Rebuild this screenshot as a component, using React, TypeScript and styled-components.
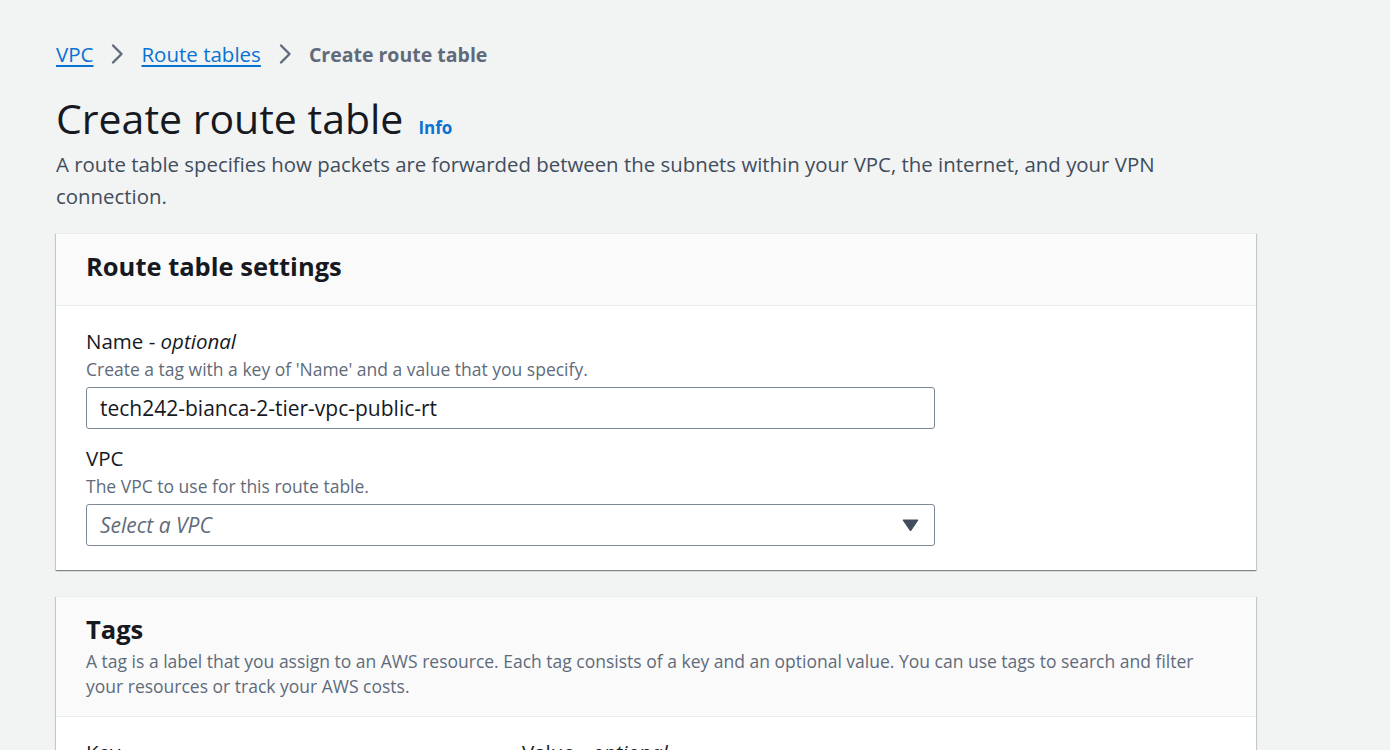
import React from "react";
import styled, { createGlobalStyle } from "styled-components";

const GlobalStyle = createGlobalStyle`
  html, body {
    margin: 0;
    padding: 0;
    background: #f2f3f3;
    font-family: "Open Sans", "Noto Sans", Arial, sans-serif;
    color: #16191f;
  }
  * { box-sizing: border-box; }
`;

const Page = styled.main`
  padding: 36px 0 0 56px;
  width: 1256px;
`;

const Breadcrumbs = styled.nav`
  display: flex;
  align-items: center;
  gap: 17px;
  height: 36px;
  font-size: 20.5px;
`;

const CrumbLink = styled.a`
  color: #0972d3;
  text-decoration: underline;
  text-underline-offset: 3px;
`;

const CrumbCurrent = styled.span`
  color: #5f6b7a;
  font-weight: 700;
  font-size: 19.5px;
`;

const Chevron = () => (
  <svg width="14" height="22" viewBox="0 0 14 22" fill="none">
    <path d="M3 2.5 L11.5 11 L3 19.5" stroke="#5f6b7a" strokeWidth="2.4" strokeLinecap="round" strokeLinejoin="round" />
  </svg>
);

const TitleRow = styled.div`
  display: flex;
  align-items: baseline;
  gap: 15px;
  margin-top: 22px;
`;

const Title = styled.h1`
  margin: 0;
  font-size: 41px;
  font-weight: 400;
  line-height: 48px;
  color: #16191f;
`;

const InfoLink = styled.a`
  color: #0972d3;
  font-size: 17px;
  font-weight: 700;
`;

const PageDesc = styled.p`
  margin: 6px 0 0;
  font-size: 20.4px;
  line-height: 32px;
  color: #414d5c;
  width: 1160px;
`;

const Card = styled.section<{ $top: number }>`
  margin-top: ${(p) => p.$top}px;
  width: 1200px;
  background: #ffffff;
  box-shadow: 0 1px 1px 0 rgba(0, 28, 36, 0.3), 1px 1px 1px 0 rgba(0, 28, 36, 0.15),
    -1px 1px 1px 0 rgba(0, 28, 36, 0.15);
  border-top: 1px solid #eaeded;
`;

const CardHeader = styled.header<{ $pt: number; $pb: number }>`
  background: #fafafa;
  border-bottom: 1px solid #eaeded;
  padding: ${(p) => p.$pt}px 30px ${(p) => p.$pb}px;
`;

const CardTitle = styled.h2`
  margin: 0;
  font-size: 25.5px;
  font-weight: 700;
  line-height: 30px;
  color: #16191f;
`;

const CardDesc = styled.p`
  margin: 5px 0 0;
  font-size: 17.5px;
  line-height: 25px;
  color: #5f6b7a;
  width: 1140px;
`;

const CardBody = styled.div`
  padding: 20px 30px 24px;
  display: flex;
  flex-direction: column;
`;

const Field = styled.div<{ $mt?: number }>`
  display: flex;
  flex-direction: column;
  margin-top: ${(p) => p.$mt ?? 0}px;
`;

const Label = styled.label`
  font-size: 20.5px;
  line-height: 30px;
  color: #16191f;
  em { font-style: italic; }
`;

const Hint = styled.div`
  font-size: 17.5px;
  line-height: 26px;
  color: #5f6b7a;
`;

const Input = styled.div`
  margin-top: 5px;
  width: 849px;
  height: 42px;
  border: 1px solid #7d8998;
  border-radius: 3px;
  background: #fff;
  display: flex;
  align-items: center;
  padding: 0 13px;
  font-size: 21px;
  color: #16191f;
`;

const Select = styled(Input)`
  justify-content: space-between;
  padding-right: 15px;
`;

const Placeholder = styled.span`
  font-style: italic;
  color: #5f6b7a;
`;

const Caret = () => (
  <svg width="17" height="13" viewBox="0 0 17 13">
    <path d="M1 1 H16 L8.5 12 Z" fill="#414d5c" stroke="#414d5c" strokeWidth="1" strokeLinejoin="round" />
  </svg>
);

const TagGrid = styled.div`
  display: grid;
  grid-template-columns: 436px 1fr;
`;

export default function App() {
  return (
    <>
      <GlobalStyle />
      <Page>
        <Breadcrumbs>
          <CrumbLink href="#">VPC</CrumbLink>
          <Chevron />
          <CrumbLink href="#">Route tables</CrumbLink>
          <Chevron />
          <CrumbCurrent>Create route table</CrumbCurrent>
        </Breadcrumbs>
        <TitleRow>
          <Title>Create route table</Title>
          <InfoLink>Info</InfoLink>
        </TitleRow>
        <PageDesc>
          A route table specifies how packets are forwarded between the subnets within your VPC, the internet, and your VPN connection.
        </PageDesc>
        <Card $top={21}>
          <CardHeader $pt={17} $pb={24}>
            <CardTitle>Route table settings</CardTitle>
          </CardHeader>
          <CardBody>
            <Field>
              <Label>
                Name - <em>optional</em>
              </Label>
              <Hint>Create a tag with a key of 'Name' and a value that you specify.</Hint>
              <Input>tech242-bianca-2-tier-vpc-public-rt</Input>
            </Field>
            <Field $mt={14}>
              <Label>VPC</Label>
              <Hint>The VPC to use for this route table.</Hint>
              <Select>
                <Placeholder>Select a VPC</Placeholder>
                <Caret />
              </Select>
            </Field>
          </CardBody>
        </Card>
        <Card $top={26}>
          <CardHeader $pt={17} $pb={17}>
            <CardTitle>Tags</CardTitle>
            <CardDesc>
              A tag is a label that you assign to an AWS resource. Each tag consists of a key and an optional value. You can use tags to search and filter your resources or track your AWS costs.
            </CardDesc>
          </CardHeader>
          <CardBody>
            <TagGrid>
              <Label>Key</Label>
              <Label>
                Value - <em>optional</em>
              </Label>
            </TagGrid>
          </CardBody>
        </Card>
      </Page>
    </>
  );
}
